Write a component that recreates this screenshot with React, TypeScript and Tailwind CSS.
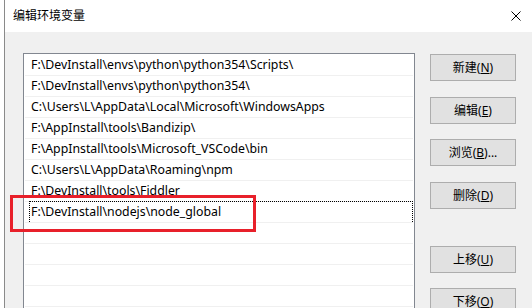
const paths = [
  "F:\\DevInstall\\envs\\python\\python354\\Scripts\\",
  "F:\\DevInstall\\envs\\python\\python354\\",
  "C:\\Users\\L\\AppData\\Local\\Microsoft\\WindowsApps",
  "F:\\AppInstall\\tools\\Bandizip\\",
  "F:\\AppInstall\\tools\\Microsoft_VSCode\\bin",
  "C:\\Users\\L\\AppData\\Roaming\\npm",
  "F:\\DevInstall\\tools\\Fiddler",
  "F:\\DevInstall\\nodejs\\node_global",
  "",
  "",
  "",
  "",
];

const buttons = [
  { label: "新建", key: "N", mt: "mt-0" },
  { label: "编辑", key: "E", mt: "mt-[16px]" },
  { label: "浏览", key: "B", mt: "mt-[15px]", suffix: "..." },
  { label: "删除", key: "D", mt: "mt-[16px]" },
  { label: "上移", key: "U", mt: "mt-[37px]" },
  { label: "下移", key: "O", mt: "mt-[15px]" },
];

const font = "font-['Noto_Sans','Noto_Sans_CJK_SC',sans-serif]";

export default function App() {
  return (
    <div className={`relative flex h-[308px] w-[532px] overflow-hidden bg-white text-black ${font}`}>
      <div className="w-[4px] shrink-0 bg-white" />
      <div className="w-px shrink-0 bg-[#8a8a8a]" />
      <div className="flex min-h-0 flex-1 flex-col">
        <div className="flex h-[32px] shrink-0 items-center justify-between bg-white pl-[8px] pr-[11px]">
          <span className="text-[12px]">编辑环境变量</span>
          <svg width="10" height="10" viewBox="0 0 10 10" className="text-black">
            <path d="M0.5 0.5L9.5 9.5M9.5 0.5L0.5 9.5" stroke="currentColor" strokeWidth="1" />
          </svg>
        </div>
        <div className="flex min-h-0 flex-1 items-start overflow-hidden bg-[#f0f0f0] pl-[18px] pt-[21px]">
          <div className="h-[300px] w-[392px] shrink-0 border border-[#828790] bg-white pt-px">
            {paths.map((p, i) => (
              <div key={i} className="relative">
                <div className="mx-px h-[21px] border-b border-[#f0f0f0] pl-[6px] text-[12.3px] leading-[20px] whitespace-nowrap">
                  {p}
                </div>
                {i === 7 && (
                  <span className="absolute left-[5px] right-[1px] top-[-1px] h-[21px] border-x border-t border-dotted border-black" />
                )}
              </div>
            ))}
          </div>
          <div className="ml-[15px] flex shrink-0 flex-col pt-px">
            {buttons.map((b) => (
              <button
                key={b.key}
                className={`${b.mt} flex h-[27px] w-[86px] shrink-0 items-center justify-center border border-[#adadad] bg-[#e1e1e1] text-[12px]`}
              >
                {b.label}(<span className="underline">{b.key}</span>){b.suffix}
              </button>
            ))}
          </div>
        </div>
      </div>
      <span className="absolute left-[10px] top-[195px] h-[37px] w-[246px] border-[3px] border-[#e8202a]" />
    </div>
  );
}
